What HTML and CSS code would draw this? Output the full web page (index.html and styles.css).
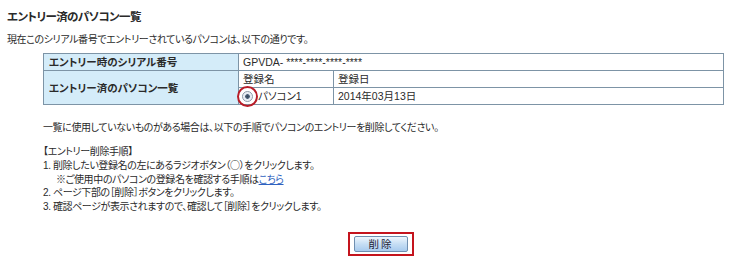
FILE: index.html
```html
<!DOCTYPE html>
<html lang="ja">
<head>
    <meta charset="utf-8">
    <title>エントリー済のパソコン一覧</title>
    <link rel="stylesheet" href="styles.css">
</head>
<body>
    <div id="page">
        <h2 class="title">エントリー済のパソコン一覧</h2>
        <p class="intro">現在このシリアル番号でエントリーされているパソコンは、以下の通りです。</p>
        <table class="entry-table">
            <tr>
                <th>エントリー時のシリアル番号</th>
                <td colspan="2">GPVDA- ****-****-****-****</td>
            </tr>
            <tr>
                <th rowspan="2">エントリー済のパソコン一覧</th>
                <td class="name-col">登録名</td>
                <td>登録日</td>
            </tr>
            <tr>
                <td class="name-col">
                    <span class="radio-mark"><input type="radio" name="pc" checked></span>パソコン1
                </td>
                <td>2014年03月13日</td>
            </tr>
        </table>
        <div class="notes">
            <p class="notice">一覧に使用していないものがある場合は、以下の手順でパソコンのエントリーを削除してください。</p>
            <p class="step">【エントリー削除手順】</p>
            <p class="step">1. 削除したい登録名の左にあるラジオボタン<span class="cjk">（○）</span>をクリックします。</p>
            <p class="step sub">※ご使用中のパソコンの登録名を確認する手順は<a href="#">こちら</a></p>
            <p class="step">2. ページ下部の［削除］ボタンをクリックします。</p>
            <p class="step">3. 確認ページが表示されますので、確認して［削除］をクリックします。</p>
        </div>
        <div class="actions">
            <span class="btn-frame"><button class="del-btn">削除</button></span>
        </div>
    </div>
</body>
</html>
```

FILE: styles.css
```css
body {
    margin: 0;
    padding: 0;
    background-color: #fff;
    color: #2a2a2a;
    font-family: "Liberation Sans", "Noto Sans CJK JP", sans-serif;
    font-size: 10px;
    letter-spacing: -0.4px;
    font-feature-settings: "palt";
}

#page {
    padding: 8px 7px 0 7px;
}

.title {
    margin: 0;
    font-size: 11.5px;
    font-weight: bold;
    letter-spacing: -0.6px;
    line-height: 18px;
}

.intro {
    margin: 6px 0 0 0;
    line-height: 16px;
}

.entry-table {
    margin: 5px 0 0 36px;
    width: 681px;
    border-collapse: collapse;
    border: 1px solid #a3bacd;
    font-size: 10.5px;
    letter-spacing: 0;
}

.entry-table th,
.entry-table td {
    height: 16px;
    padding: 0 4px;
    border: 1px solid #7d94a6;
    font-weight: normal;
    text-align: left;
    line-height: 16px;
    white-space: nowrap;
}

.entry-table th {
    width: 185px;
    padding-left: 5px;
    background-color: #d4ecf9;
    font-weight: bold;
}

.entry-table .name-col {
    width: 86px;
}

.radio-mark {
    display: inline-block;
    position: relative;
    width: 11px;
    height: 11px;
    margin: 0 5px 0 -1px;
    vertical-align: -2px;
}

.radio-mark input {
    appearance: none;
    display: block;
    margin: 0;
    width: 11px;
    height: 11px;
    border: 1px solid #8c99a8;
    border-radius: 50%;
    background: radial-gradient(circle, #334558 0, #4c6078 2px, #dfe6ee 2.6px, #f6f8fb 5px);
}

/* 赤い丸の囲み */
.radio-mark::after {
    content: "";
    position: absolute;
    left: -5px;
    top: -5px;
    width: 17px;
    height: 17px;
    border: 2px solid #b81d28;
    border-radius: 50%;
}

.notes {
    margin: 16px 0 0 36px;
}

.notes p {
    margin: 0;
    line-height: 13.5px;
}

.notes .notice {
    margin-bottom: 10px;
}

.notes .sub {
    padding-left: 13px;
}

.notes .cjk {
    font-family: "Noto Sans CJK JP", sans-serif;
}

.notes a {
    color: #2f62c0;
}

.actions {
    display: flex;
    justify-content: center;
    margin-top: 19px;
}

.btn-frame {
    display: block;
    margin-left: 32px;
    padding: 2px 4px;
    border: 2px solid #c4141d;
}

.del-btn {
    display: block;
    width: 54px;
    height: 16px;
    padding: 0;
    border: 1px solid #6f8fb0;
    border-radius: 2px;
    background: linear-gradient(#eef6fd, #c6def4 50%, #a8cbee);
    color: #223;
    font-family: inherit;
    font-size: 10.5px;
    font-feature-settings: "palt";
    letter-spacing: 2px;
    line-height: 14px;
}
```
